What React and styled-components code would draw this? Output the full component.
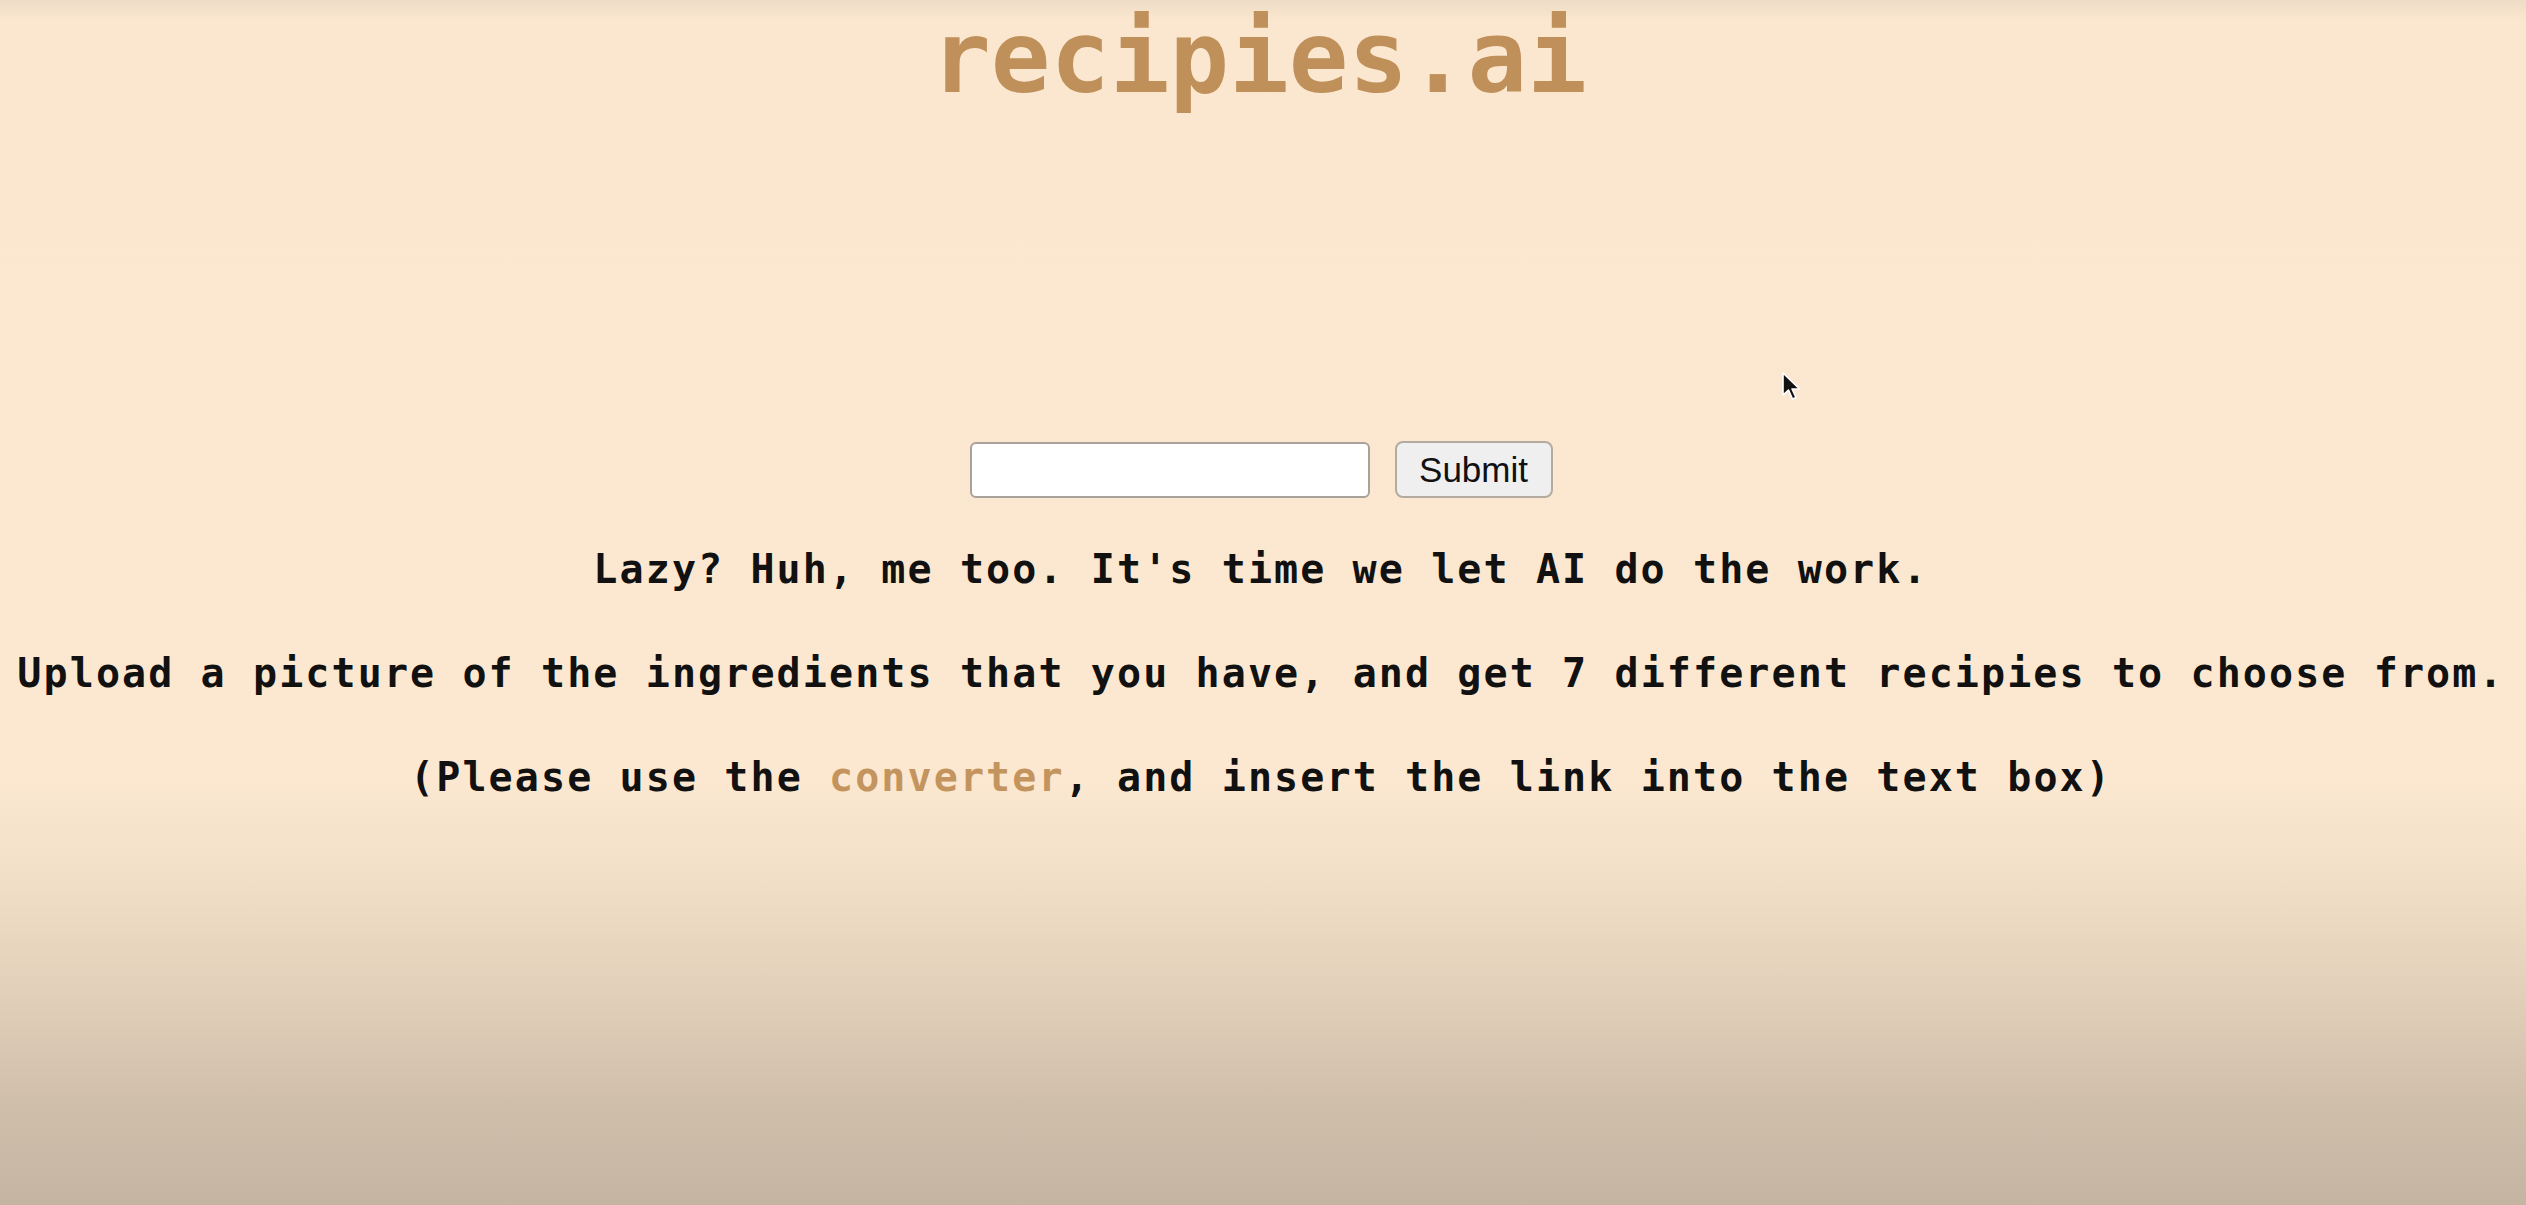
import React from 'react'
import styled, { createGlobalStyle } from 'styled-components'

const GlobalStyle = createGlobalStyle`
  html, body {
    margin: 0;
    padding: 0;
  }
  body {
    font-family: "DejaVu Sans Mono", "Liberation Mono", monospace;
    background: #fce8d0;
  }
`

const Page = styled.div`
  position: relative;
  min-height: 100vh;
  display: flex;
  flex-direction: column;
  align-items: center;
  background: linear-gradient(
    to bottom,
    #eedcc6 0px,
    #fbe7cf 20px,
    #fce8d0 780px,
    #f3e0c8 870px,
    #e2d0ba 990px,
    #d0bfab 1100px,
    #c4b4a1 1205px
  );
`

const Title = styled.h1`
  margin: 0 8px 0 0;
  font-family: "DejaVu Sans Mono", monospace;
  font-size: 99px;
  font-weight: bold;
  line-height: 116px;
  color: #c0905a;
`

const Form = styled.form`
  display: flex;
  align-items: center;
  gap: 25px;
  margin-top: 325px;
  margin-right: 4px;
  height: 57px;
`

const TextBox = styled.input`
  box-sizing: border-box;
  width: 400px;
  height: 56px;
  border: 2px solid #a9a29a;
  border-radius: 6px;
  background: #fff;
  padding: 0 12px;
  font-family: "Liberation Sans", Arial, sans-serif;
  font-size: 32px;
  outline: none;
`

const SubmitButton = styled.button`
  box-sizing: border-box;
  width: 158px;
  height: 57px;
  border: 2px solid #b3aba0;
  border-radius: 8px;
  background: #efefef;
  color: #111;
  font-family: "Liberation Sans", Arial, sans-serif;
  font-size: 35px;
  padding: 0;
  cursor: pointer;
`

const Copy = styled.p`
  margin: ${p => (p.$first ? '39px' : '40px')} 4px 0 0;
  font-family: "DejaVu Sans Mono", monospace;
  font-size: 40px;
  font-weight: bold;
  letter-spacing: 2.1px;
  line-height: 64px;
  color: #111;
  text-align: center;
  white-space: nowrap;
`

const Converter = styled.a`
  color: #c3945e;
  text-decoration: none;
`

const Pointer = styled.svg`
  position: absolute;
  left: 1781px;
  top: 371px;
  width: 21px;
  height: 31px;
`

export default function App() {
  return (
    <>
      <GlobalStyle />
      <Page>
        <Title>recipies.ai</Title>
        <Form onSubmit={e => e.preventDefault()}>
          <TextBox type="text" />
          <SubmitButton type="submit">Submit</SubmitButton>
        </Form>
        <Copy $first>Lazy? Huh, me too. It's time we let AI do the work.</Copy>
        <Copy>
          Upload a picture of the ingredients that you have, and get 7 different recipies to choose from.
        </Copy>
        <Copy>
          (Please use the <Converter href="#">converter</Converter>, and insert the link into the text box)
        </Copy>
        <Pointer viewBox="0 0 21 31">
          <path
            d="M2 2 L2 24 L7.5 19 L11.5 28 L15 26.5 L11 18 L18.5 18 Z"
            fill="#111"
            stroke="#fff"
            strokeWidth="1.6"
            strokeLinejoin="round"
          />
        </Pointer>
      </Page>
    </>
  )
}
